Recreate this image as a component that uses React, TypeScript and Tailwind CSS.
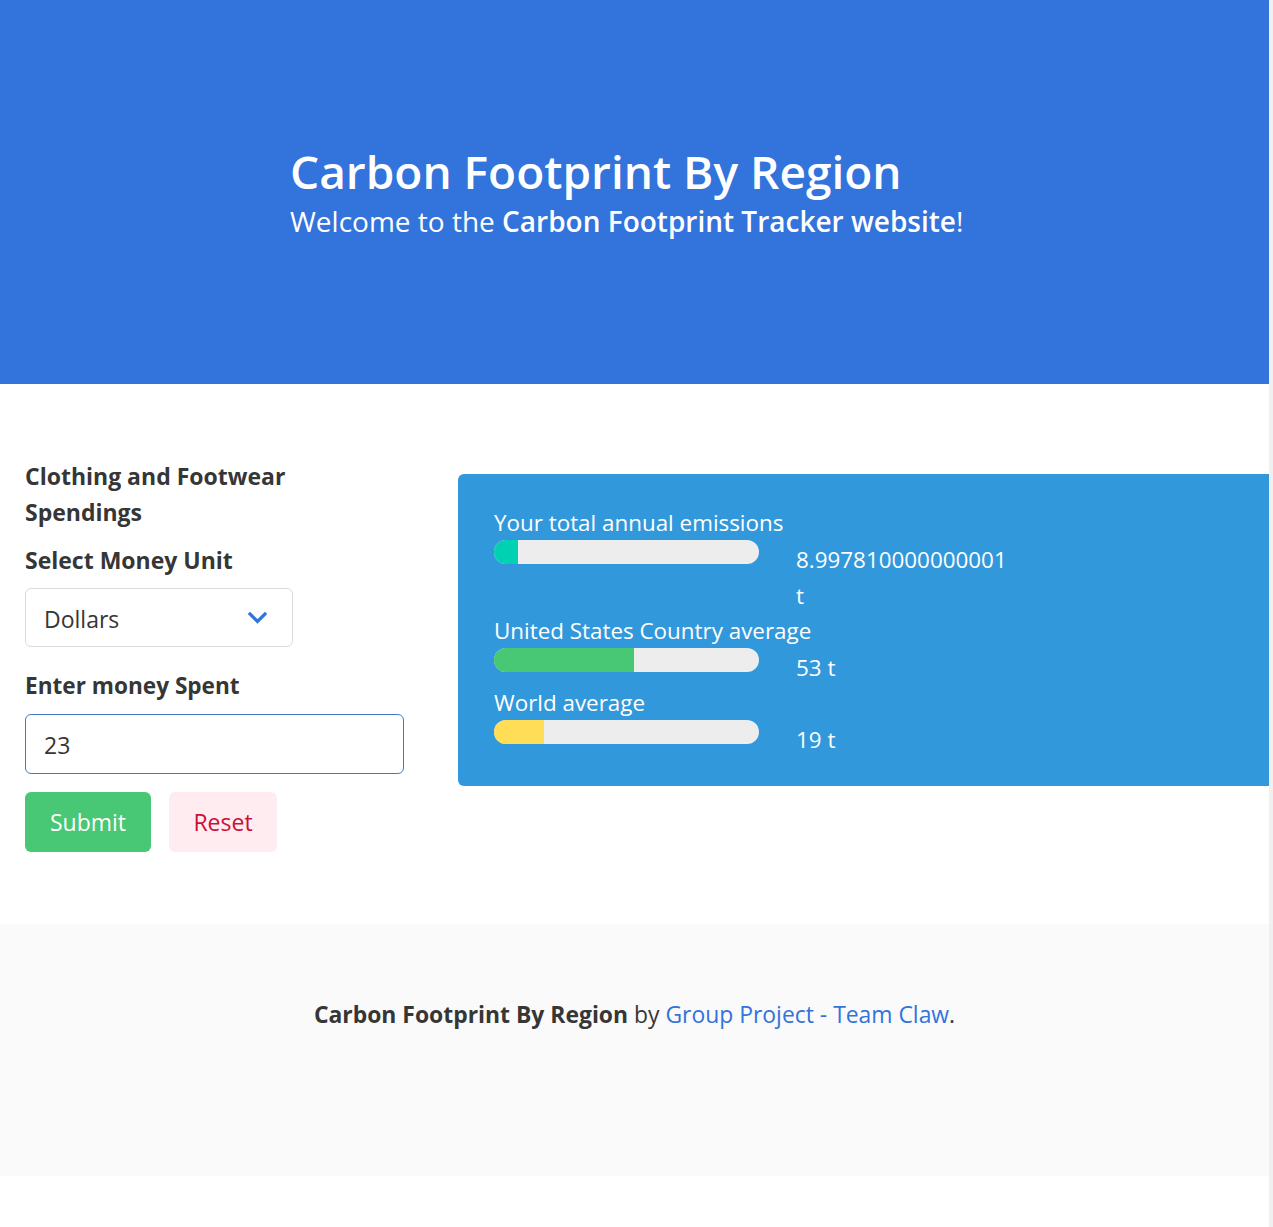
import React from 'react';

const font = { fontFamily: '"Open Sans", "Noto Sans", sans-serif' };

type Bar = { label: string; value: string; fill: string; width: number };

const bars: Bar[] = [
  { label: 'Your total annual emissions', value: '8.997810000000001 t', fill: 'bg-[#00d1b2]', width: 24 },
  { label: 'United States Country average', value: '53 t', fill: 'bg-[#48c774]', width: 140 },
  { label: 'World average', value: '19 t', fill: 'bg-[#ffdd57]', width: 50 },
];

function EmissionRow({ bar }: { bar: Bar }) {
  return (
    <div>
      <div className="text-[22.4px] leading-[34px] text-white">{bar.label}</div>
      <div className="flex items-start">
        <div className="relative h-6 w-[265px] overflow-hidden rounded-full bg-[#ededed]">
          <div className={`h-full ${bar.fill}`} style={{ width: bar.width }} />
        </div>
        <div className="ml-[37px] w-[215px] pt-[2px] text-[22.4px] leading-9 text-white">{bar.value}</div>
      </div>
    </div>
  );
}

export default function App() {
  return (
    <div className="flex min-h-[1227px] w-[1273px] overflow-hidden bg-white text-[#363636]" style={font}>
      <div className="w-[1269px] shrink-0 overflow-hidden">
        {/* hero */}
        <section className="flex h-[384px] flex-col justify-center bg-[#3273dc] pl-[290px]">
          <h1 className="text-[46px] font-semibold leading-[54px] text-white">Carbon Footprint By Region</h1>
          <p className="mt-[3px] text-[28px] leading-[40px] text-white">
            Welcome to the <strong className="font-semibold">Carbon Footprint Tracker website</strong>!
          </p>
        </section>

        {/* main */}
        <section className="flex pt-[74px] pb-[72px] pl-[25px]">
          <div className="w-[379px] shrink-0">
            <h2 className="max-w-[300px] text-[23px] font-bold leading-9">Clothing and Footwear Spendings</h2>
            <div className="mt-[12px] text-[23px] font-bold leading-9">Select Money Unit</div>
            <div className="mt-[10px] flex h-[59px] w-[268px] items-center justify-between rounded-[6px] border border-[#dbdbdb] pl-[18px] pr-[25px] pt-[4px]">
              <span className="text-[23px] text-[#363636]">Dollars</span>
              <svg width="19" height="12" viewBox="0 0 19 12" fill="none" className="-mt-[4px]">
                <polyline points="2,2 9.5,9.5 17,2" stroke="#3273dc" strokeWidth="3.2" strokeLinecap="square" />
              </svg>
            </div>
            <div className="mt-[21px] text-[22.6px] font-bold leading-9">Enter money Spent</div>
            <div className="mt-[10px] flex h-[60px] items-center rounded-[6px] border border-[#4a76c8] px-[18px] pt-[2px] text-[23px]">
              23
            </div>
            <div className="mt-[18px] flex gap-[18px]">
              <button className="h-[60px] w-[126px] rounded-[6px] bg-[#48c774] text-[23px] text-white">Submit</button>
              <button className="h-[60px] w-[108px] rounded-[6px] bg-[#feecf0] text-[23px] text-[#cc0f35]">Reset</button>
            </div>
          </div>

          <div className="ml-[54px] mt-[16px] h-[312px] w-[880px] shrink-0 rounded-[6px] bg-[#3298dc] pl-[36px] pt-[32px]">
            {bars.map((b) => (
              <EmissionRow key={b.label} bar={b} />
            ))}
          </div>
        </section>

        {/* footer */}
        <footer className="flex h-[252px] justify-center bg-[#fafafa] pt-[74px] text-[22.9px]">
          <p>
            <strong className="font-bold">Carbon Footprint By Region</strong> by{' '}
            <a className="text-[#3273dc]">Group Project - Team Claw</a>.
          </p>
        </footer>
      </div>
      <div className="w-1 shrink-0 bg-[#f0f0f0]" />
    </div>
  );
}
